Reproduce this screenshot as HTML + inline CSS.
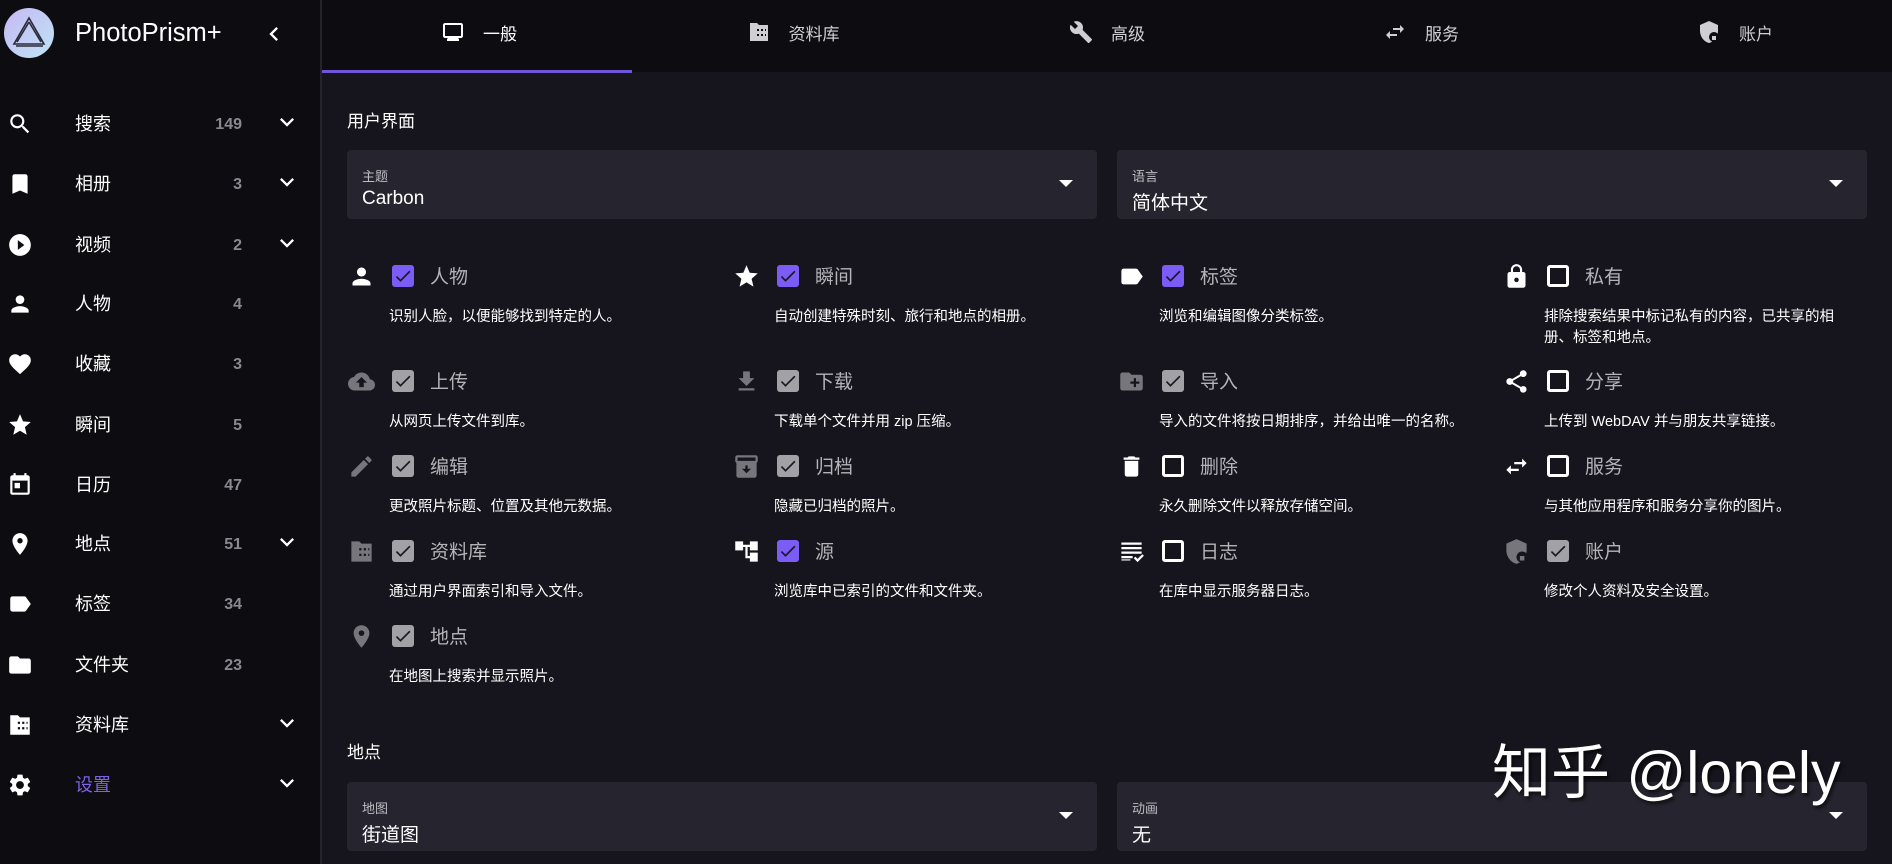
<!DOCTYPE html>
<html><head><meta charset="utf-8"><style>
*{margin:0;padding:0;box-sizing:border-box}
body{width:1892px;height:864px;overflow:hidden;background:#16151d;font-family:"Liberation Sans","Noto Sans CJK SC",sans-serif;color:#fff;position:relative}
.abs{position:absolute}
#side{left:0;top:0;width:322px;height:864px;background:#0d0c11;border-right:2px solid #25242b}
.nav{position:absolute;left:0;width:320px;height:40px}
.nav svg.i{position:absolute;left:7px;top:8px;width:26px;height:26px;fill:#fff}
.nav .t{position:absolute;left:75px;top:9px;font-size:18px;line-height:24px}
.nav .c{position:absolute;right:78px;top:12px;font-size:16px;font-weight:bold;color:#8a8990;line-height:20px}
.nav svg.ch{position:absolute;left:273px;top:5px;width:28px;height:28px;fill:#fff}
#tabs{left:322px;top:0;width:1570px;height:72px;background:#0d0c11}
.tab{position:absolute;top:-4px;width:314px;height:72px;display:flex;align-items:center;justify-content:center;font-size:17px;color:#d0d0d4}
.tab svg{width:24px;height:24px;fill:#cfcfd3;margin-right:18px}
.sel{position:absolute;height:69px;background:#26252f;border-radius:4px}
.sel .l{position:absolute;left:15px;top:16px;font-size:13px;color:#bdbdc3}
.sel .v{position:absolute;left:15px;top:38px;font-size:19px;color:#fff}
.sel .a{position:absolute;right:24px;top:30px;width:0;height:0;border-left:7px solid transparent;border-right:7px solid transparent;border-top:7px solid #fff}
.h{position:absolute;left:347px;font-size:17px;color:#fff}
.f{position:absolute;width:385px;height:80px}
.f svg.i{position:absolute;left:1px;top:1px;width:27px;height:27px}
.f .cb{position:absolute;left:45px;top:3px;width:22px;height:22px;border-radius:3px}
.cb.p{background:#7b5cf5}
.cb.g{background:#a2a2a6}
.cb.u{border:3px solid #fff}
.cb svg{position:absolute;left:1px;top:1px;width:20px;height:20px;fill:#1a1921}
.f .t{position:absolute;left:83px;top:3px;font-size:19px;color:#b3b3b8;line-height:26px}
.f .d{position:absolute;left:42px;top:45px;width:305px;font-size:14.5px;line-height:21px;color:#fff}
.w{fill:#fff}.gr{fill:#77767c}
</style></head><body>
<div id="side" class="abs">
 <div class="abs" style="left:4px;top:8px;width:50px;height:50px;border-radius:50%;background:linear-gradient(135deg,#c8b8f4,#bde4f5)">
  <svg viewBox="0 0 50 50" width="50" height="50"><path d="M25 10 L40 36 L10 36 Z M25 14 L37 34 M13 34 L25 14 M12 38 L39 38" stroke="#2a2a3a" stroke-width="1.6" fill="none"/></svg>
 </div>
 <div class="abs" style="left:75px;top:19px;font-size:25.5px;color:#fff">PhotoPrism+</div>
 <svg class="abs" style="left:260px;top:20px;width:28px;height:28px;fill:#fff" viewBox="0 0 24 24"><path d="M15.41 7.41L14 6l-6 6 6 6 1.41-1.41L10.83 12z"/></svg>

 <div class="nav" style="top:103px"><svg class="i" viewBox="0 0 24 24"><path d="M15.5 14h-.79l-.28-.27A6.47 6.47 0 0016 9.5 6.5 6.5 0 109.5 16c1.61 0 3.09-.59 4.230-1.57l.27.28v.79l5 4.99L20.49 19l-4.99-5zm-6 0C7.01 14 5 11.99 5 9.5S7.01 5 9.5 5 14 7.01 14 9.5 11.99 14 9.5 14z"/></svg><span class="t">搜索</span><span class="c">149</span><svg class="ch" viewBox="0 0 24 24"><path d="M7.41 8.59L12 13.17l4.59-4.58L18 10l-6 6-6-6z"/></svg></div>
 <div class="nav" style="top:163px"><svg class="i" viewBox="0 0 24 24"><path d="M17 3H7c-1.1 0-2 .9-2 2v16l7-3 7 3V5c0-1.1-.9-2-2-2z"/></svg><span class="t">相册</span><span class="c">3</span><svg class="ch" viewBox="0 0 24 24"><path d="M7.41 8.59L12 13.17l4.59-4.58L18 10l-6 6-6-6z"/></svg></div>
 <div class="nav" style="top:224px"><svg class="i" viewBox="0 0 24 24"><path d="M12 2C6.48 2 2 6.48 2 12s4.48 10 10 10 10-4.48 10-10S17.52 2 12 2zm-2 14.5v-9l6 4.5-6 4.5z"/></svg><span class="t">视频</span><span class="c">2</span><svg class="ch" viewBox="0 0 24 24"><path d="M7.41 8.59L12 13.17l4.59-4.58L18 10l-6 6-6-6z"/></svg></div>
 <div class="nav" style="top:283px"><svg class="i" viewBox="0 0 24 24"><path d="M12 12c2.21 0 4-1.79 4-4s-1.79-4-4-4-4 1.79-4 4 1.79 4 4 4zm0 2c-2.67 0-8 1.34-8 4v2h16v-2c0-2.66-5.33-4-8-4z"/></svg><span class="t">人物</span><span class="c">4</span></div>
 <div class="nav" style="top:343px"><svg class="i" viewBox="0 0 24 24"><path d="M12 21.35l-1.45-1.32C5.4 15.36 2 12.28 2 8.5 2 5.42 4.42 3 7.5 3c1.74 0 3.41.81 4.5 2.09C13.09 3.810 14.76 3 16.5 3 19.58 3 22 5.42 22 8.5c0 3.78-3.4 6.86-8.55 11.54L12 21.35z"/></svg><span class="t">收藏</span><span class="c">3</span></div>
 <div class="nav" style="top:404px"><svg class="i" viewBox="0 0 24 24"><path d="M12 17.27L18.18 21l-1.64-7.03L22 9.24l-7.19-.61L12 2 9.19 8.63 2 9.24l5.46 4.73L5.82 21z"/></svg><span class="t">瞬间</span><span class="c">5</span></div>
 <div class="nav" style="top:464px"><svg class="i" viewBox="0 0 24 24"><path d="M19 3h-1V1h-2v2H8V1H6v2H5c-1.11 0-2 .9-2 2v14a2 2 0 002 2h14c1.1 0 2-.9 2-2V5c0-1.1-.9-2-2-2zm0 16H5V8h14v11zM7 10h5v5H7z"/></svg><span class="t">日历</span><span class="c">47</span></div>
 <div class="nav" style="top:523px"><svg class="i" viewBox="0 0 24 24"><path d="M12 2C8.13 2 5 5.13 5 9c0 5.25 7 13 7 13s7-7.75 7-13c0-3.87-3.13-7-7-7zm0 9.5a2.5 2.5 0 010-5 2.5 2.5 0 010 5z"/></svg><span class="t">地点</span><span class="c">51</span><svg class="ch" viewBox="0 0 24 24"><path d="M7.41 8.59L12 13.17l4.59-4.58L18 10l-6 6-6-6z"/></svg></div>
 <div class="nav" style="top:583px"><svg class="i" viewBox="0 0 24 24"><path d="M17.63 5.84C17.27 5.33 16.67 5 16 5L5 5.01C3.9 5.01 3 5.9 3 7v10c0 1.1.9 1.99 2 1.99L16 19c.67 0 1.27-.33 1.63-.84L22 12l-4.37-6.16z"/></svg><span class="t">标签</span><span class="c">34</span></div>
 <div class="nav" style="top:644px"><svg class="i" viewBox="0 0 24 24"><path d="M10 4H4c-1.1 0-1.99.9-1.99 2L2 18c0 1.1.9 2 2 2h16c1.1 0 2-.9 2-2V8c0-1.1-.9-2-2-2h-8l-2-2z"/></svg><span class="t">文件夹</span><span class="c">23</span></div>
 <div class="nav" style="top:704px"><svg class="i" viewBox="0 0 24 24"><path d="M3 3h7l2 2h9v16H3zM10 9h2v2h-2zm4 0h2v2h-2zm4 0h1v2h-1zM10 14h2v2h-2zm4 0h2v2h-2zm4 0h1v2h-1z" fill-rule="evenodd"/></svg><span class="t">资料库</span><svg class="ch" viewBox="0 0 24 24"><path d="M7.41 8.59L12 13.17l4.59-4.58L18 10l-6 6-6-6z"/></svg></div>
 <div class="nav" style="top:764px"><svg class="i" viewBox="0 0 24 24"><path d="M19.14 12.94c.04-.3.06-.61.06-.94 0-.32-.02-.64-.07-.94l2.03-1.58a.49.49 0 00.12-.61l-1.92-3.32a.488.488 0 00-.59-.22l-2.39.96c-.5-.38-1.03-.7-1.62-.94l-.36-2.54a.484.484 0 00-.48-.41h-3.84c-.24 0-.43.17-.47.41l-.36 2.54c-.59.24-1.13.57-1.62.94l-2.39-.96c-.22-.08-.47 0-.59.22L2.74 8.87c-.12.21-.08.47.12.61l2.03 1.58c-.05.3-.09.63-.09.94s.02.64.07.94l-2.03 1.58a.49.49 0 00-.12.61l1.92 3.32c.12.22.37.29.59.22l2.39-.96c.5.38 1.03.7 1.62.94l.36 2.54c.05.24.24.41.48.41h3.84c.24 0 .44-.17.47-.41l.36-2.54c.59-.24 1.13-.56 1.62-.94l2.39.96c.22.08.47 0 .59-.22l1.92-3.32c.12-.22.07-.47-.12-.61l-2.01-1.58zM12 15.6c-1.98 0-3.6-1.62-3.6-3.6s1.62-3.6 3.6-3.6 3.6 1.62 3.6 3.6-1.62 3.6-3.6 3.6z"/></svg><span class="t" style="color:#7d62e8">设置</span><svg class="ch" viewBox="0 0 24 24"><path d="M7.41 8.59L12 13.17l4.59-4.58L18 10l-6 6-6-6z"/></svg></div>
</div>

<div id="tabs" class="abs">
 <div class="tab" style="left:0;color:#fff"><svg viewBox="0 0 24 24" style="fill:#fff"><path d="M20 3H4c-1.1 0-2 .9-2 2v11c0 1.1.9 2 2 2h3l-1 1v2h12v-2l-1-1h3c1.1 0 2-.9 2-2V5c0-1.1-.9-2-2-2zm0 13H4V5h16v11z"/></svg>一般</div>
 <div class="tab" style="left:314px"><svg viewBox="0 0 24 24"><path d="M3 3h7l2 2h9v16H3zM10 9h2v2h-2zm4 0h2v2h-2zm4 0h1v2h-1zM10 14h2v2h-2zm4 0h2v2h-2zm4 0h1v2h-1z" fill-rule="evenodd"/></svg>资料库</div>
 <div class="tab" style="left:628px"><svg viewBox="0 0 24 24"><path d="M22.7 19l-9.1-9.1c.9-2.3.4-5-1.5-6.9-2-2-5-2.4-7.4-1.3L9 6 6 9 1.6 4.7C.4 7.1.9 10.1 2.9 12.1c1.9 1.9 4.6 2.4 6.9 1.5l9.1 9.1c.4.4 1 .4 1.4 0l2.3-2.3c.5-.4.5-1.1.1-1.4z"/></svg>高级</div>
 <div class="tab" style="left:942px"><svg viewBox="0 0 24 24"><path d="M6.99 11L3 15l3.99 4v-3H14v-2H6.99v-3zM21 9l-3.99-4v3H10v2h7.01v3L21 9z"/></svg>服务</div>
 <div class="tab" style="left:1256px"><svg viewBox="0 0 24 24"><path d="M12 1L3 5v6c0 5.55 3.84 10.74 9 12 5.16-1.26 9-6.45 9-12V5l-9-4z"/><circle cx="17" cy="17" r="5" fill="#0d0c11"/><path d="M15 16h4v4h-4z"/></svg>账户</div>
 <div class="abs" style="left:0;top:70px;width:310px;height:3px;background:#6f55d8"></div>
</div>

<div class="h" style="top:107px">用户界面</div>
<div class="sel" style="left:347px;top:150px;width:750px"><span class="l">主题</span><span class="v">Carbon</span><span class="a"></span></div>
<div class="sel" style="left:1117px;top:150px;width:750px"><span class="l">语言</span><span class="v">简体中文</span><span class="a"></span></div>

<div class="f" style="left:347px;top:262px"><svg class="i w" viewBox="0 0 24 24"><path d="M12 12c2.21 0 4-1.79 4-4s-1.79-4-4-4-4 1.79-4 4 1.79 4 4 4zm0 2c-2.67 0-8 1.34-8 4v2h16v-2c0-2.66-5.33-4-8-4z"/></svg><div class="cb p"><svg viewBox="0 0 24 24"><path d="M9 16.17L4.83 12l-1.42 1.41L9 19 21 7l-1.41-1.41z"/></svg></div><span class="t">人物</span><div class="d">识别人脸，以便能够找到特定的人。</div></div>
<div class="f" style="left:732px;top:262px"><svg class="i w" viewBox="0 0 24 24"><path d="M12 17.27L18.18 21l-1.64-7.03L22 9.24l-7.19-.61L12 2 9.19 8.63 2 9.24l5.46 4.73L5.82 21z"/></svg><div class="cb p"><svg viewBox="0 0 24 24"><path d="M9 16.17L4.83 12l-1.42 1.41L9 19 21 7l-1.41-1.41z"/></svg></div><span class="t">瞬间</span><div class="d">自动创建特殊时刻、旅行和地点的相册。</div></div>
<div class="f" style="left:1117px;top:262px"><svg class="i w" viewBox="0 0 24 24"><path d="M17.63 5.84C17.27 5.33 16.67 5 16 5L5 5.01C3.9 5.01 3 5.9 3 7v10c0 1.1.9 1.99 2 1.99L16 19c.67 0 1.27-.33 1.63-.84L22 12l-4.37-6.16z"/></svg><div class="cb p"><svg viewBox="0 0 24 24"><path d="M9 16.17L4.83 12l-1.42 1.41L9 19 21 7l-1.41-1.41z"/></svg></div><span class="t">标签</span><div class="d">浏览和编辑图像分类标签。</div></div>
<div class="f" style="left:1502px;top:262px"><svg class="i w" viewBox="0 0 24 24"><path d="M18 8h-1V6c0-2.76-2.24-5-5-5S7 3.24 7 6v2H6c-1.1 0-2 .9-2 2v10c0 1.1.9 2 2 2h12c1.1 0 2-.9 2-2V10c0-1.1-.9-2-2-2zm-6 9c-1.1 0-2-.9-2-2s.9-2 2-2 2 .9 2 2-.9 2-2 2zm3.1-9H8.9V6c0-1.71 1.39-3.1 3.1-3.1 1.71 0 3.1 1.39 3.1 3.1v2z"/></svg><div class="cb u"></div><span class="t">私有</span><div class="d">排除搜索结果中标记私有的内容，已共享的相册、标签和地点。</div></div>

<div class="f" style="left:347px;top:367px"><svg class="i gr" viewBox="0 0 24 24"><path d="M19.35 10.04A7.49 7.49 0 0012 4C9.11 4 6.6 5.64 5.35 8.04A5.994 5.994 0 000 14c0 3.31 2.69 6 6 6h13c2.76 0 5-2.24 5-5 0-2.64-2.05-4.78-4.65-4.96zM14 13v4h-4v-4H7l5-5 5 5h-3z"/></svg><div class="cb g"><svg viewBox="0 0 24 24"><path d="M9 16.17L4.83 12l-1.42 1.41L9 19 21 7l-1.41-1.41z"/></svg></div><span class="t">上传</span><div class="d">从网页上传文件到库。</div></div>
<div class="f" style="left:732px;top:367px"><svg class="i gr" viewBox="0 0 24 24"><path d="M19 9h-4V3H9v6H5l7 7 7-7zM5 18v2h14v-2H5z"/></svg><div class="cb g"><svg viewBox="0 0 24 24"><path d="M9 16.17L4.83 12l-1.42 1.41L9 19 21 7l-1.41-1.41z"/></svg></div><span class="t">下载</span><div class="d">下载单个文件并用 zip 压缩。</div></div>
<div class="f" style="left:1117px;top:367px"><svg class="i gr" viewBox="0 0 24 24"><path d="M20 6h-8l-2-2H4c-1.11 0-1.99.89-1.99 2L2 18c0 1.11.89 2 2 2h16c1.11 0 2-.89 2-2V8c0-1.11-.89-2-2-2zm-1 8h-3v3h-2v-3h-3v-2h3V9h2v3h3v2z"/></svg><div class="cb g"><svg viewBox="0 0 24 24"><path d="M9 16.17L4.83 12l-1.42 1.41L9 19 21 7l-1.41-1.41z"/></svg></div><span class="t">导入</span><div class="d">导入的文件将按日期排序，并给出唯一的名称。</div></div>
<div class="f" style="left:1502px;top:367px"><svg class="i w" viewBox="0 0 24 24"><path d="M18 16.08c-.76 0-1.44.3-1.96.77L8.91 12.7c.05-.23.09-.46.09-.7s-.04-.47-.09-.7l7.05-4.11c.54.5 1.25.81 2.04.81 1.66 0 3-1.34 3-3s-1.34-3-3-3-3 1.34-3 3c0 .24.04.47.09.7L8.04 9.81C7.5 9.31 6.79 9 6 9c-1.66 0-3 1.34-3 3s1.34 3 3 3c.79 0 1.5-.31 2.04-.81l7.12 4.16c-.05.21-.08.43-.08.65 0 1.61 1.31 2.92 2.92 2.92 1.61 0 2.92-1.31 2.92-2.92s-1.31-2.92-2.92-2.92z"/></svg><div class="cb u"></div><span class="t">分享</span><div class="d">上传到 WebDAV 并与朋友共享链接。</div></div>

<div class="f" style="left:347px;top:452px"><svg class="i gr" viewBox="0 0 24 24"><path d="M3 17.25V21h3.75L17.81 9.94l-3.75-3.75L3 17.25zM20.71 7.04a.996.996 0 000-1.41l-2.34-2.34a.996.996 0 00-1.41 0l-1.83 1.83 3.75 3.75 1.83-1.83z"/></svg><div class="cb g"><svg viewBox="0 0 24 24"><path d="M9 16.17L4.83 12l-1.42 1.41L9 19 21 7l-1.41-1.41z"/></svg></div><span class="t">编辑</span><div class="d">更改照片标题、位置及其他元数据。</div></div>
<div class="f" style="left:732px;top:452px"><svg class="i gr" viewBox="0 0 24 24"><path d="M20 2H4c-1 0-2 .9-2 2v3.01c0 .72.43 1.34 1 1.69V20c0 1.1 1.1 2 2 2h14c.9 0 2-.9 2-2V8.7c.57-.35 1-.97 1-1.69V4c0-1.1-1-2-2-2zm-8 16l-4-4h3v-3h2v3h3l-4 4zm8-11H4V4h16v3z"/></svg><div class="cb g"><svg viewBox="0 0 24 24"><path d="M9 16.17L4.83 12l-1.42 1.41L9 19 21 7l-1.41-1.41z"/></svg></div><span class="t">归档</span><div class="d">隐藏已归档的照片。</div></div>
<div class="f" style="left:1117px;top:452px"><svg class="i w" viewBox="0 0 24 24"><path d="M6 19c0 1.1.9 2 2 2h8c1.1 0 2-.9 2-2V7H6v12zM19 4h-3.5l-1-1h-5l-1 1H5v2h14V4z"/></svg><div class="cb u"></div><span class="t">删除</span><div class="d">永久删除文件以释放存储空间。</div></div>
<div class="f" style="left:1502px;top:452px"><svg class="i w" viewBox="0 0 24 24"><path d="M6.99 11L3 15l3.99 4v-3H14v-2H6.99v-3zM21 9l-3.99-4v3H10v2h7.01v3L21 9z"/></svg><div class="cb u"></div><span class="t">服务</span><div class="d">与其他应用程序和服务分享你的图片。</div></div>

<div class="f" style="left:347px;top:537px"><svg class="i gr" viewBox="0 0 24 24"><path d="M3 3h7l2 2h9v16H3zM10 9h2v2h-2zm4 0h2v2h-2zm4 0h1v2h-1zM10 14h2v2h-2zm4 0h2v2h-2zm4 0h1v2h-1z" fill-rule="evenodd"/></svg><div class="cb g"><svg viewBox="0 0 24 24"><path d="M9 16.17L4.83 12l-1.42 1.41L9 19 21 7l-1.41-1.41z"/></svg></div><span class="t">资料库</span><div class="d">通过用户界面索引和导入文件。</div></div>
<div class="f" style="left:732px;top:537px"><svg class="i w" viewBox="0 0 24 24"><path d="M22 11V3h-7v3H9V3H2v8h7V8h2v10h4v3h7v-8h-7v3h-2V8h2v3z"/></svg><div class="cb p"><svg viewBox="0 0 24 24"><path d="M9 16.17L4.83 12l-1.42 1.41L9 19 21 7l-1.41-1.41z"/></svg></div><span class="t">源</span><div class="d">浏览库中已索引的文件和文件夹。</div></div>
<div class="f" style="left:1117px;top:537px"><svg class="i w" viewBox="0 0 24 24"><path d="M3 4h18v2H3zm0 4h18v2H3zm0 4h18v2H3zm0 4h10v2H3zm0 4h8v-1H3zM14 18l1.4-1.4 2 2 4.2-4.2L23 15.8l-5.6 5.6z"/></svg><div class="cb u"></div><span class="t">日志</span><div class="d">在库中显示服务器日志。</div></div>
<div class="f" style="left:1502px;top:537px"><svg class="i gr" viewBox="0 0 24 24"><path d="M12 1L3 5v6c0 5.55 3.84 10.74 9 12 5.16-1.26 9-6.45 9-12V5l-9-4z"/><circle cx="17" cy="17" r="5" fill="#16151d"/><path d="M15 16h4v4h-4z"/></svg><div class="cb g"><svg viewBox="0 0 24 24"><path d="M9 16.17L4.83 12l-1.42 1.41L9 19 21 7l-1.41-1.41z"/></svg></div><span class="t">账户</span><div class="d">修改个人资料及安全设置。</div></div>

<div class="f" style="left:347px;top:622px"><svg class="i gr" viewBox="0 0 24 24"><path d="M12 2C8.13 2 5 5.13 5 9c0 5.25 7 13 7 13s7-7.75 7-13c0-3.87-3.13-7-7-7zm0 9.5a2.5 2.5 0 010-5 2.5 2.5 0 010 5z"/></svg><div class="cb g"><svg viewBox="0 0 24 24"><path d="M9 16.17L4.83 12l-1.42 1.41L9 19 21 7l-1.41-1.41z"/></svg></div><span class="t">地点</span><div class="d">在地图上搜索并显示照片。</div></div>

<div class="h" style="top:738px">地点</div>
<div class="sel" style="left:347px;top:782px;width:750px"><span class="l">地图</span><span class="v">街道图</span><span class="a"></span></div>
<div class="sel" style="left:1117px;top:782px;width:750px"><span class="l">动画</span><span class="v">无</span><span class="a"></span></div>

<div class="abs" style="left:1492px;top:738px;font-size:59px;line-height:70px;color:#fff;text-shadow:2px 3px 3px rgba(0,0,0,.6);white-space:nowrap">知乎 @lonely</div>
</body></html>
